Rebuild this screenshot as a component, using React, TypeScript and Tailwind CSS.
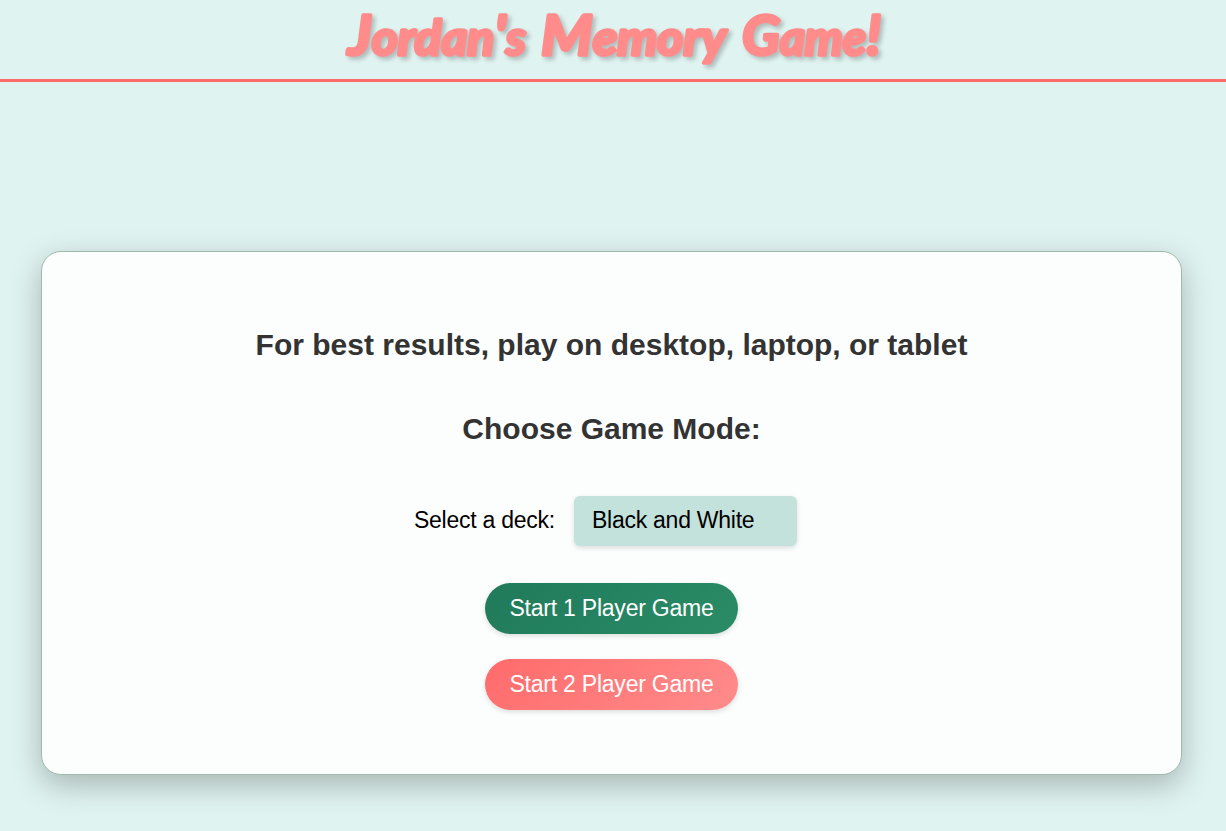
import React from "react";

function Title() {
  return (
    <header className="flex h-[82px] justify-center border-b-[3px] border-[#ff6b6b]">
      <h1 className="h-[79px] w-[560px]">
        <svg
          viewBox="333 0 560 79"
          className="h-[79px] w-[560px] overflow-visible fill-[#ff8b8b] stroke-[#ff8b8b] font-['Lato',sans-serif] font-bold italic [filter:drop-shadow(3px_3px_2px_rgba(0,0,0,0.22))]"
          strokeWidth="3.5"
          strokeLinejoin="round"
          strokeLinecap="round"
          fontSize="56"
        >
          <text x="348" y="55" textLength="178" lengthAdjust="spacingAndGlyphs">
            J<tspan fontSize="48">ordan</tspan>'<tspan fontSize="48">s</tspan>
          </text>
          <text x="541" y="55" textLength="185" lengthAdjust="spacingAndGlyphs">
            M<tspan fontSize="48">emory</tspan>
          </text>
          <text x="742" y="55" textLength="139" lengthAdjust="spacingAndGlyphs">
            G<tspan fontSize="48">ame</tspan>!
          </text>
        </svg>
      </h1>
    </header>
  );
}

export default function App() {
  return (
    <div className="h-[831px] overflow-hidden bg-[#dff3f0] font-['Liberation_Sans',Arial,sans-serif]">
      <Title />
      <main className="mt-[169px] ml-[41px] flex h-[524px] w-[1141px] flex-col items-center rounded-[20px] border border-[#9dbdac] bg-[#fcfefd] pt-[75px] shadow-[0_10px_30px_rgba(0,0,0,0.25)]">
        <h2 className="text-[30px] leading-[36px] font-bold whitespace-nowrap text-[#333333]">
          For best results, play on desktop, laptop, or tablet
        </h2>
        <h2 className="mt-[48px] text-[30px] leading-[36px] font-bold whitespace-nowrap text-[#333333]">
          Choose Game Mode:
        </h2>
        <div className="mt-[49px] ml-[358px] flex w-[397px] items-center justify-between self-start text-[23px] tracking-[-0.26px] text-black">
          <label className="w-[150px] pb-[2px] pl-[14px] whitespace-nowrap">Select a deck:</label>
          <button className="h-[50px] w-[223px] rounded-[6px] bg-[#c2e2db] pb-[2px] pl-[18px] text-left whitespace-nowrap shadow-[0_2px_5px_rgba(0,0,0,0.13)]">
            Black and White
          </button>
        </div>
        <button className="mt-[37px] h-[51px] w-[253px] rounded-full bg-[linear-gradient(135deg,#207a5b,#2a8c66)] text-[23px] tracking-[-0.23px] whitespace-nowrap text-white shadow-[0_2px_5px_rgba(0,0,0,0.13)]">
          Start 1 Player Game
        </button>
        <button className="mt-[25px] h-[51px] w-[253px] rounded-full bg-[linear-gradient(135deg,#ff6b6b,#ff8b8b)] text-[23px] tracking-[-0.23px] whitespace-nowrap text-white shadow-[0_2px_5px_rgba(0,0,0,0.13)]">
          Start 2 Player Game
        </button>
      </main>
    </div>
  );
}
